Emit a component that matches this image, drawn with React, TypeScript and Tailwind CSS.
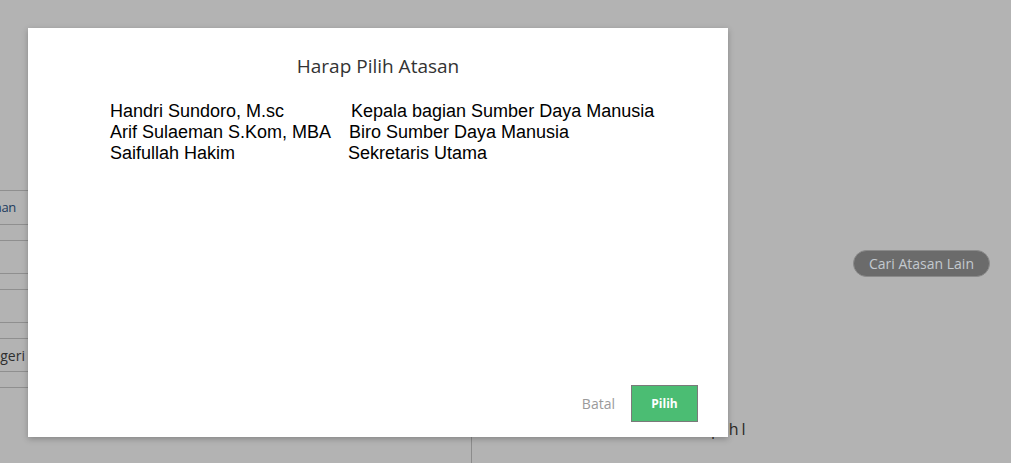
import React from "react";

const rows = [
  { h: "h-[34px]", text: "Pimpinan", cls: "text-[#1d3b5e] pr-[12px] text-[13px] tracking-[-0.3px]" },
  { h: "h-[16px]" },
  { h: "h-[33px]" },
  { h: "h-[16px]" },
  { h: "h-[33px]" },
  { h: "h-[16px]" },
  { h: "h-[33px]", text: "Dalam Negeri", cls: "text-[#2f2f2f] pr-[3px] text-[14px]" },
  { h: "h-[16px]" },
];

const people = [
  { name: "Handri Sundoro, M.sc", role: "Kepala bagian Sumber Daya Manusia", pad: "pl-[3px]" },
  { name: "Arif Sulaeman S.Kom, MBA", role: "Biro Sumber Daya Manusia", pad: "pl-[1px]" },
  { name: "Saifullah Hakim", role: "Sekretaris Utama", pad: "pl-0" },
];

export default function App() {
  return (
    <div className="relative w-[1011px] h-[463px] overflow-hidden bg-[#b3b3b3] font-['Open_Sans',sans-serif]">
      {/* background page (dimmed) */}
      <div className="flex h-full">
        <div className="w-[28px] overflow-hidden pt-[190px]">
          <div className="border-t border-[#8f8f8f]">
            {rows.map((r, i) => (
              <div
                key={i}
                className={`${r.h} border-b border-[#8f8f8f] flex items-center justify-end whitespace-nowrap ${r.cls ?? ""}`}
              >
                {r.text}
              </div>
            ))}
          </div>
        </div>
        <div className="w-[444px] flex flex-col">
          <div className="mt-auto h-[120px] border-r border-[#8c8c8c]" />
        </div>
        <div className="flex-1 flex flex-col">
          <div className="pt-[250px] pl-[381px]">
            <div className="w-[137px] h-[27px] rounded-full bg-[#6b6b6b] border border-[#8a8a8a] flex items-center justify-center text-[14px] text-[#c3c9cf] whitespace-nowrap">
              Cari Atasan Lain
            </div>
          </div>
          <div className="mt-auto pb-[24px] pl-[239px] text-[16px] text-[#2c2926] leading-[20px] whitespace-nowrap">
            <span>p</span>
            <span className="ml-[8px]">h</span>
            <span className="ml-[3px]">l</span>
          </div>
        </div>
      </div>

      {/* modal */}
      <div className="absolute left-[28px] top-[28px] w-[700px] h-[409px] bg-white shadow-[0_2px_6px_rgba(0,0,0,0.25)] flex flex-col">
        <div className="pt-[25px] text-center text-[19px] leading-[26px] text-[#333333]">
          Harap Pilih Atasan
        </div>
        <div className="pt-[22px] pl-[82px] font-['Liberation_Sans',Arial,sans-serif] text-[18px] leading-[21px] text-black">
          {people.map((p) => (
            <div key={p.name} className="flex whitespace-nowrap">
              <div className="w-[238px]">{p.name}</div>
              <div className={p.pad}>{p.role}</div>
            </div>
          ))}
        </div>
        <div className="mt-auto flex items-center justify-end gap-[16px] pr-[30px] pb-[15px]">
          <span className="text-[14px] text-[#9a9a9a]">Batal</span>
          <button className="w-[67px] h-[37px] bg-[#4bbd73] border border-[#7a7a7a] text-white text-[12px] font-bold">
            Pilih
          </button>
        </div>
      </div>
    </div>
  );
}
